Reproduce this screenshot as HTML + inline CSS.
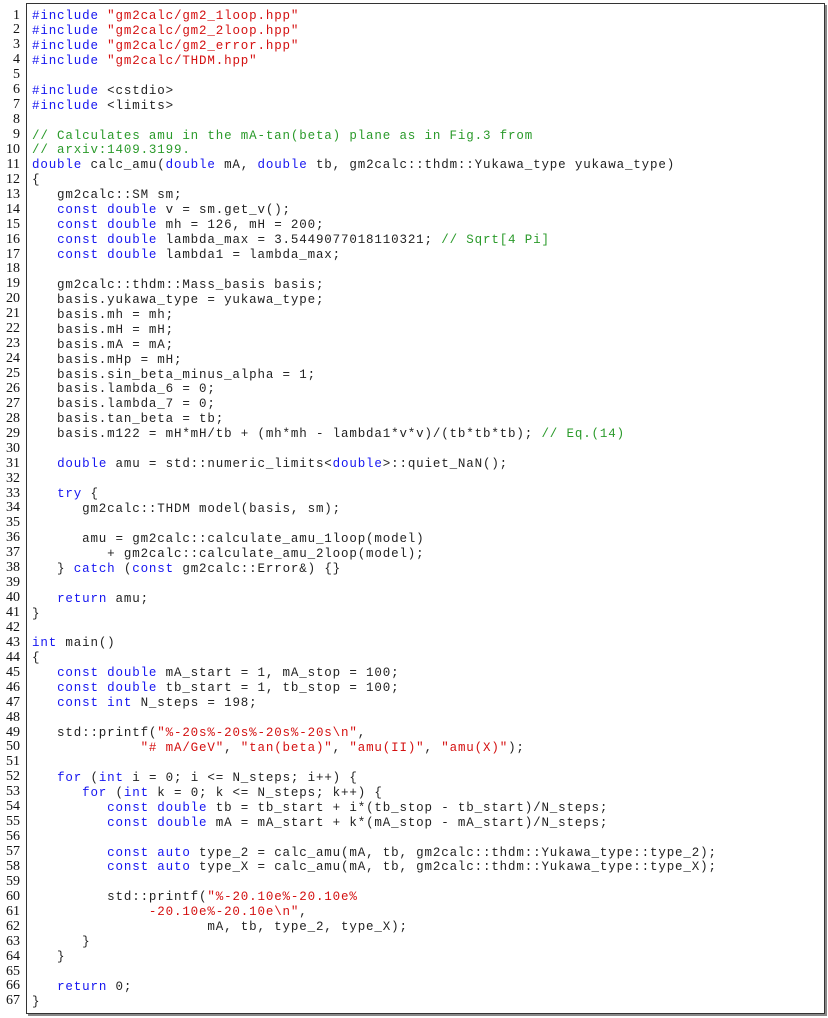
<!DOCTYPE html>
<html><head><meta charset="utf-8"><style>
html,body{margin:0;padding:0;background:#fff;width:828px;height:1018px;overflow:hidden;position:relative}
.box{position:absolute;left:26px;top:3px;width:797px;height:1009px;border:1px solid #333;box-shadow:2px 2px 0 #888;background:#fff}
.nums{position:absolute;left:0;top:8.5px;width:20px;text-align:right;font-family:"Liberation Serif",serif;font-size:14px;line-height:14.93px;color:#111;margin:0}
pre.code{position:absolute;left:32px;top:9px;margin:0;font-family:"Liberation Mono",monospace;font-size:12.5px;letter-spacing:0.85px;line-height:14.93px;color:#222}
.k{color:#1515f0}.s{color:#d41010}.c{color:#2a9a2a}
</style></head><body>
<div class="box"></div>
<pre class="nums">1
2
3
4
5
6
7
8
9
10
11
12
13
14
15
16
17
18
19
20
21
22
23
24
25
26
27
28
29
30
31
32
33
34
35
36
37
38
39
40
41
42
43
44
45
46
47
48
49
50
51
52
53
54
55
56
57
58
59
60
61
62
63
64
65
66
67</pre>
<pre class="code"><span class="k">#include</span> <span class="s">"gm2calc/gm2_1loop.hpp"</span>
<span class="k">#include</span> <span class="s">"gm2calc/gm2_2loop.hpp"</span>
<span class="k">#include</span> <span class="s">"gm2calc/gm2_error.hpp"</span>
<span class="k">#include</span> <span class="s">"gm2calc/THDM.hpp"</span>

<span class="k">#include</span> &lt;cstdio&gt;
<span class="k">#include</span> &lt;limits&gt;

<span class="c">// Calculates amu in the mA-tan(beta) plane as in Fig.3 from</span>
<span class="c">// arxiv:1409.3199.</span>
<span class="k">double</span> calc_amu(<span class="k">double</span> mA, <span class="k">double</span> tb, gm2calc::thdm::Yukawa_type yukawa_type)
{
   gm2calc::SM sm;
   <span class="k">const double</span> v = sm.get_v();
   <span class="k">const double</span> mh = 126, mH = 200;
   <span class="k">const double</span> lambda_max = 3.5449077018110321; <span class="c">// Sqrt[4 Pi]</span>
   <span class="k">const double</span> lambda1 = lambda_max;

   gm2calc::thdm::Mass_basis basis;
   basis.yukawa_type = yukawa_type;
   basis.mh = mh;
   basis.mH = mH;
   basis.mA = mA;
   basis.mHp = mH;
   basis.sin_beta_minus_alpha = 1;
   basis.lambda_6 = 0;
   basis.lambda_7 = 0;
   basis.tan_beta = tb;
   basis.m122 = mH*mH/tb + (mh*mh - lambda1*v*v)/(tb*tb*tb); <span class="c">// Eq.(14)</span>

   <span class="k">double</span> amu = std::numeric_limits&lt;<span class="k">double</span>&gt;::quiet_NaN();

   <span class="k">try</span> {
      gm2calc::THDM model(basis, sm);

      amu = gm2calc::calculate_amu_1loop(model)
         + gm2calc::calculate_amu_2loop(model);
   } <span class="k">catch</span> (<span class="k">const</span> gm2calc::Error&amp;) {}

   <span class="k">return</span> amu;
}

<span class="k">int</span> main()
{
   <span class="k">const double</span> mA_start = 1, mA_stop = 100;
   <span class="k">const double</span> tb_start = 1, tb_stop = 100;
   <span class="k">const int</span> N_steps = 198;

   std::printf(<span class="s">"%-20s%-20s%-20s%-20s\n"</span>,
             <span class="s">"# mA/GeV"</span>, <span class="s">"tan(beta)"</span>, <span class="s">"amu(II)"</span>, <span class="s">"amu(X)"</span>);

   <span class="k">for</span> (<span class="k">int</span> i = 0; i &lt;= N_steps; i++) {
      <span class="k">for</span> (<span class="k">int</span> k = 0; k &lt;= N_steps; k++) {
         <span class="k">const double</span> tb = tb_start + i*(tb_stop - tb_start)/N_steps;
         <span class="k">const double</span> mA = mA_start + k*(mA_stop - mA_start)/N_steps;

         <span class="k">const auto</span> type_2 = calc_amu(mA, tb, gm2calc::thdm::Yukawa_type::type_2);
         <span class="k">const auto</span> type_X = calc_amu(mA, tb, gm2calc::thdm::Yukawa_type::type_X);

         std::printf(<span class="s">"%-20.10e%-20.10e%</span>
              <span class="s">-20.10e%-20.10e\n"</span>,
                     mA, tb, type_2, type_X);
      }
   }

   <span class="k">return</span> 0;
}</pre>
</body></html>
